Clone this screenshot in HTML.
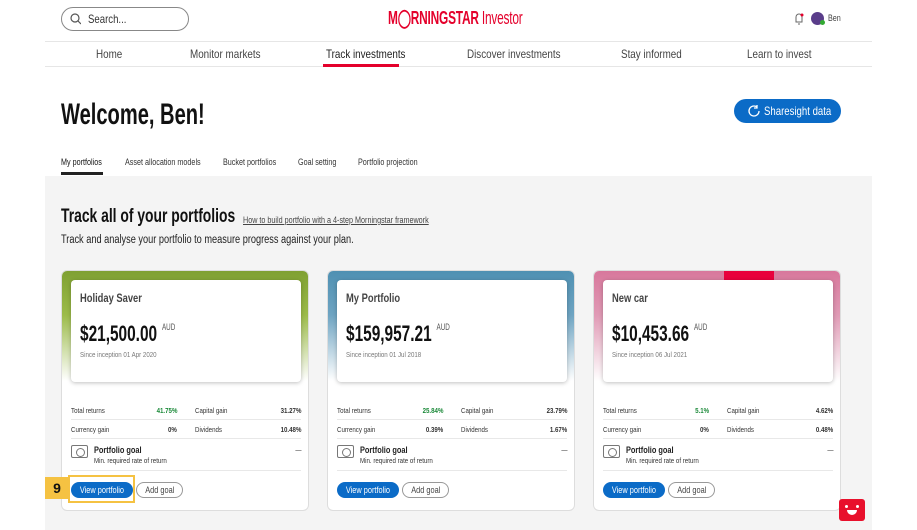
<!DOCTYPE html>
<html><head><meta charset="utf-8"><style>
*{margin:0;padding:0;box-sizing:border-box}
body{width:917px;height:530px;background:#fff;font-family:"Liberation Sans",sans-serif;color:#222;position:relative;overflow:hidden}
.abs{position:absolute;white-space:nowrap}
.n{transform:scaleX(.8);transform-origin:0 50%}
.search{left:61px;top:7px;width:128px;height:24px;border:1px solid #888;border-radius:12px}
.logo{left:388px;top:8px;font-size:18px;color:#e4002b;letter-spacing:-.3px}
.nav{left:45px;top:41px;width:827px;height:26px;border-top:1px solid #e6e6e6;border-bottom:1px solid #e6e6e6}
.nav span{position:absolute;top:5px;font-size:12px;color:#444;white-space:nowrap;transform:scaleX(.82);transform-origin:0 50%}
h1{position:absolute;left:61px;top:98px;font-size:30px;font-weight:bold;color:#111;white-space:nowrap;transform:scaleX(.67);transform-origin:0 50%}
.btn{left:734px;top:99px;width:107px;height:24px;background:#0b6bc7;border-radius:12px}
.tabs span{position:absolute;top:157px;font-size:9px;color:#333;white-space:nowrap;transform:scaleX(.8);transform-origin:0 50%}
.grey{left:45px;top:176px;width:827px;height:354px;background:#f4f4f4}
.card{position:absolute;top:270px;width:248px;height:241px;background:#fff;border:1px solid #ddd;border-radius:6px;overflow:hidden}
.ban{position:absolute;left:0;top:0;width:100%;height:110px}
.inner{position:absolute;left:9px;top:9px;width:230px;height:102px;background:#fff;border-radius:4px;box-shadow:0 1px 4px rgba(0,0,0,.25)}
.inner div{white-space:nowrap;transform:scaleX(.82);transform-origin:0 50%}
.inner .t{position:absolute;left:9px;top:11px;font-size:12px;font-weight:bold;color:#444;transform:scaleX(.78)}
.inner .v{position:absolute;left:9px;top:41px;font-size:22px;font-weight:bold;color:#111;transform:scaleX(.7)}
.inner .v sup{font-size:9px;font-weight:normal;color:#555;vertical-align:top;margin-left:7px;position:relative;top:1px}
.inner .s{position:absolute;left:9px;top:70px;font-size:7.5px;color:#777}
.row{position:absolute;left:9px;width:230px;font-size:7.5px;color:#333;white-space:nowrap}
.row span{position:absolute;top:0;transform:scaleX(.82);transform-origin:0 50%}
.row span.r{transform-origin:100% 50%}
.hr{position:absolute;left:9px;width:230px;height:1px;background:#e8e8e8}
.vb{position:absolute;left:9px;top:211px;width:62px;height:16px;background:#0b6bc7;border-radius:8px;color:#fff;font-size:9px;text-align:center;line-height:16px;white-space:nowrap}
.ag{position:absolute;left:74px;top:211px;width:47px;height:16px;border:1px solid #999;border-radius:8px;color:#444;font-size:9px;text-align:center;line-height:14px;white-space:nowrap}
.vb span,.ag span{display:inline-block;transform:scaleX(.82)}
.cam{position:absolute;left:9px;top:174px;width:17px;height:13px;border:1px solid #777;border-radius:2px}
.cam:after{content:"";position:absolute;left:4px;top:2px;width:7px;height:7px;border:1px solid #777;border-radius:50%}
</style></head><body>
<div class="abs search"></div>
<div class="abs n" style="left:88px;top:12px;font-size:12px;color:#333">Search...</div>
<svg class="abs" style="left:70px;top:13px" width="11" height="12"><circle cx="5" cy="5" r="4" fill="none" stroke="#555" stroke-width="1.2"/><line x1="8" y1="8" x2="11" y2="11" stroke="#555" stroke-width="1.2"/></svg>
<div class="abs logo" style="transform:scaleX(.66);transform-origin:0 50%"><b>M◯RNINGSTAR</b> Investor</div>
<svg class="abs" style="left:793px;top:12px" width="12" height="13"><path d="M3 10V5a3 3 0 0 1 6 0v5H2.5M5 12h2" fill="none" stroke="#666"/><circle cx="9" cy="3" r="1.5" fill="#e4002b"/></svg>
<div class="abs" style="left:811px;top:12px;width:13px;height:13px;border-radius:50%;background:#5a3d8a"></div>
<div class="abs" style="left:820px;top:20px;width:5px;height:5px;border-radius:50%;background:#3a3"></div>
<div class="abs n" style="left:828px;top:13px;font-size:9px;color:#444">Ben</div>
<div class="abs nav">
<span style="left:51px">Home</span><span style="left:145px">Monitor markets</span><span style="left:281px;color:#222">Track investments</span><span style="left:422px">Discover investments</span><span style="left:576px">Stay informed</span><span style="left:702px">Learn to invest</span>
<div style="position:absolute;left:278px;top:22px;width:76px;height:3px;background:#e4002b"></div>
</div>
<h1>Welcome, Ben!</h1>
<div class="abs btn"></div>
<div class="abs n" style="left:764px;top:104px;font-size:12px;color:#fff">Sharesight data</div>
<svg class="abs" style="left:747px;top:104px" width="14" height="14"><path d="M12 7a5 5 0 1 1-2-4M10 1v3h-3" fill="none" stroke="#fff" stroke-width="1.3"/></svg>
<div class="tabs"><span style="left:61px;color:#111">My portfolios</span><span style="left:125px">Asset allocation models</span><span style="left:223px">Bucket portfolios</span><span style="left:298px">Goal setting</span><span style="left:358px">Portfolio projection</span></div>
<div class="abs" style="left:61px;top:172px;width:42px;height:3px;background:#222"></div>
<div class="abs grey"></div>
<div class="abs" style="left:61px;top:206px;font-size:19px;font-weight:bold;color:#111;transform:scaleX(.73);transform-origin:0 50%">Track all of your portfolios</div>
<div class="abs n" style="left:243px;top:215px;font-size:9px;color:#444;text-decoration:underline">How to build portfolio with a 4-step Morningstar framework</div>
<div class="abs n" style="left:61px;top:234px;font-size:11.5px;color:#222">Track and analyse your portfolio to measure progress against your plan.</div>

<div class="card" style="left:61px"><div class="ban" style="background:linear-gradient(#7fa032,#9cbb4a 40%,rgba(255,255,255,0))"></div>
<div class="inner"><div class="t">Holiday Saver</div><div class="v">$21,500.00<sup>AUD</sup></div><div class="s">Since inception 01 Apr 2020</div></div>
<div class="row" style="top:135px"><span style="left:0">Total returns</span><span class="r" style="right:124px;color:#1c8a3a;font-weight:bold">41.75%</span><span style="left:124px">Capital gain</span><span class="r" style="right:0;font-weight:bold">31.27%</span></div>
<div class="hr" style="top:148px"></div>
<div class="row" style="top:154px"><span style="left:0">Currency gain</span><span class="r" style="right:124px;font-weight:bold">0%</span><span style="left:124px">Dividends</span><span class="r" style="right:0;font-weight:bold">10.48%</span></div>
<div class="hr" style="top:167px"></div>
<div class="cam"></div>
<div class="row" style="top:174px;left:32px;font-size:9px;font-weight:bold;color:#222"><span>Portfolio goal</span></div>
<div class="row" style="top:185px;left:32px;font-size:7.5px"><span>Min. required rate of return</span></div>
<div class="row" style="top:174px"><span class="r" style="right:0">—</span></div>
<div class="hr" style="top:199px"></div>
<div class="vb"><span>View portfolio</span></div><div class="ag"><span>Add goal</span></div></div>

<div class="card" style="left:327px"><div class="ban" style="background:linear-gradient(#4f90b2,#6ea4c2 40%,rgba(255,255,255,0))"></div>
<div class="inner"><div class="t">My Portfolio</div><div class="v">$159,957.21<sup>AUD</sup></div><div class="s">Since inception 01 Jul 2018</div></div>
<div class="row" style="top:135px"><span style="left:0">Total returns</span><span class="r" style="right:124px;color:#1c8a3a;font-weight:bold">25.84%</span><span style="left:124px">Capital gain</span><span class="r" style="right:0;font-weight:bold">23.79%</span></div>
<div class="hr" style="top:148px"></div>
<div class="row" style="top:154px"><span style="left:0">Currency gain</span><span class="r" style="right:124px;font-weight:bold">0.39%</span><span style="left:124px">Dividends</span><span class="r" style="right:0;font-weight:bold">1.67%</span></div>
<div class="hr" style="top:167px"></div>
<div class="cam"></div>
<div class="row" style="top:174px;left:32px;font-size:9px;font-weight:bold;color:#222"><span>Portfolio goal</span></div>
<div class="row" style="top:185px;left:32px;font-size:7.5px"><span>Min. required rate of return</span></div>
<div class="row" style="top:174px"><span class="r" style="right:0">—</span></div>
<div class="hr" style="top:199px"></div>
<div class="vb"><span>View portfolio</span></div><div class="ag"><span>Add goal</span></div></div>

<div class="card" style="left:593px"><div class="ban" style="background:linear-gradient(#d8789c,#e09ab5 40%,rgba(255,255,255,0))"></div>
<div style="position:absolute;left:130px;top:0;width:50px;height:10px;background:#e8003c"></div>
<div class="inner"><div class="t">New car</div><div class="v">$10,453.66<sup>AUD</sup></div><div class="s">Since inception 06 Jul 2021</div></div>
<div class="row" style="top:135px"><span style="left:0">Total returns</span><span class="r" style="right:124px;color:#1c8a3a;font-weight:bold">5.1%</span><span style="left:124px">Capital gain</span><span class="r" style="right:0;font-weight:bold">4.62%</span></div>
<div class="hr" style="top:148px"></div>
<div class="row" style="top:154px"><span style="left:0">Currency gain</span><span class="r" style="right:124px;font-weight:bold">0%</span><span style="left:124px">Dividends</span><span class="r" style="right:0;font-weight:bold">0.48%</span></div>
<div class="hr" style="top:167px"></div>
<div class="cam"></div>
<div class="row" style="top:174px;left:32px;font-size:9px;font-weight:bold;color:#222"><span>Portfolio goal</span></div>
<div class="row" style="top:185px;left:32px;font-size:7.5px"><span>Min. required rate of return</span></div>
<div class="row" style="top:174px"><span class="r" style="right:0">—</span></div>
<div class="hr" style="top:199px"></div>
<div class="vb"><span>View portfolio</span></div><div class="ag"><span>Add goal</span></div></div>

<div class="abs" style="left:45px;top:477px;width:24px;height:22px;background:#f5c242;font-size:14px;font-weight:bold;color:#111;text-align:center;line-height:22px">9</div>
<div class="abs" style="left:68px;top:475px;width:67px;height:28px;border:2px solid #f5c242"></div>
<div class="abs" style="left:839px;top:499px;width:26px;height:22px;background:#e8102c;border-radius:3px"></div>
<div class="abs" style="left:845px;top:505px;width:3px;height:3px;background:#fff;border-radius:50%"></div>
<div class="abs" style="left:856px;top:505px;width:3px;height:3px;background:#fff;border-radius:50%"></div>
<div class="abs" style="left:847px;top:510px;width:10px;height:5px;background:#fff;border-radius:0 0 5px 5px"></div>
</body></html>
